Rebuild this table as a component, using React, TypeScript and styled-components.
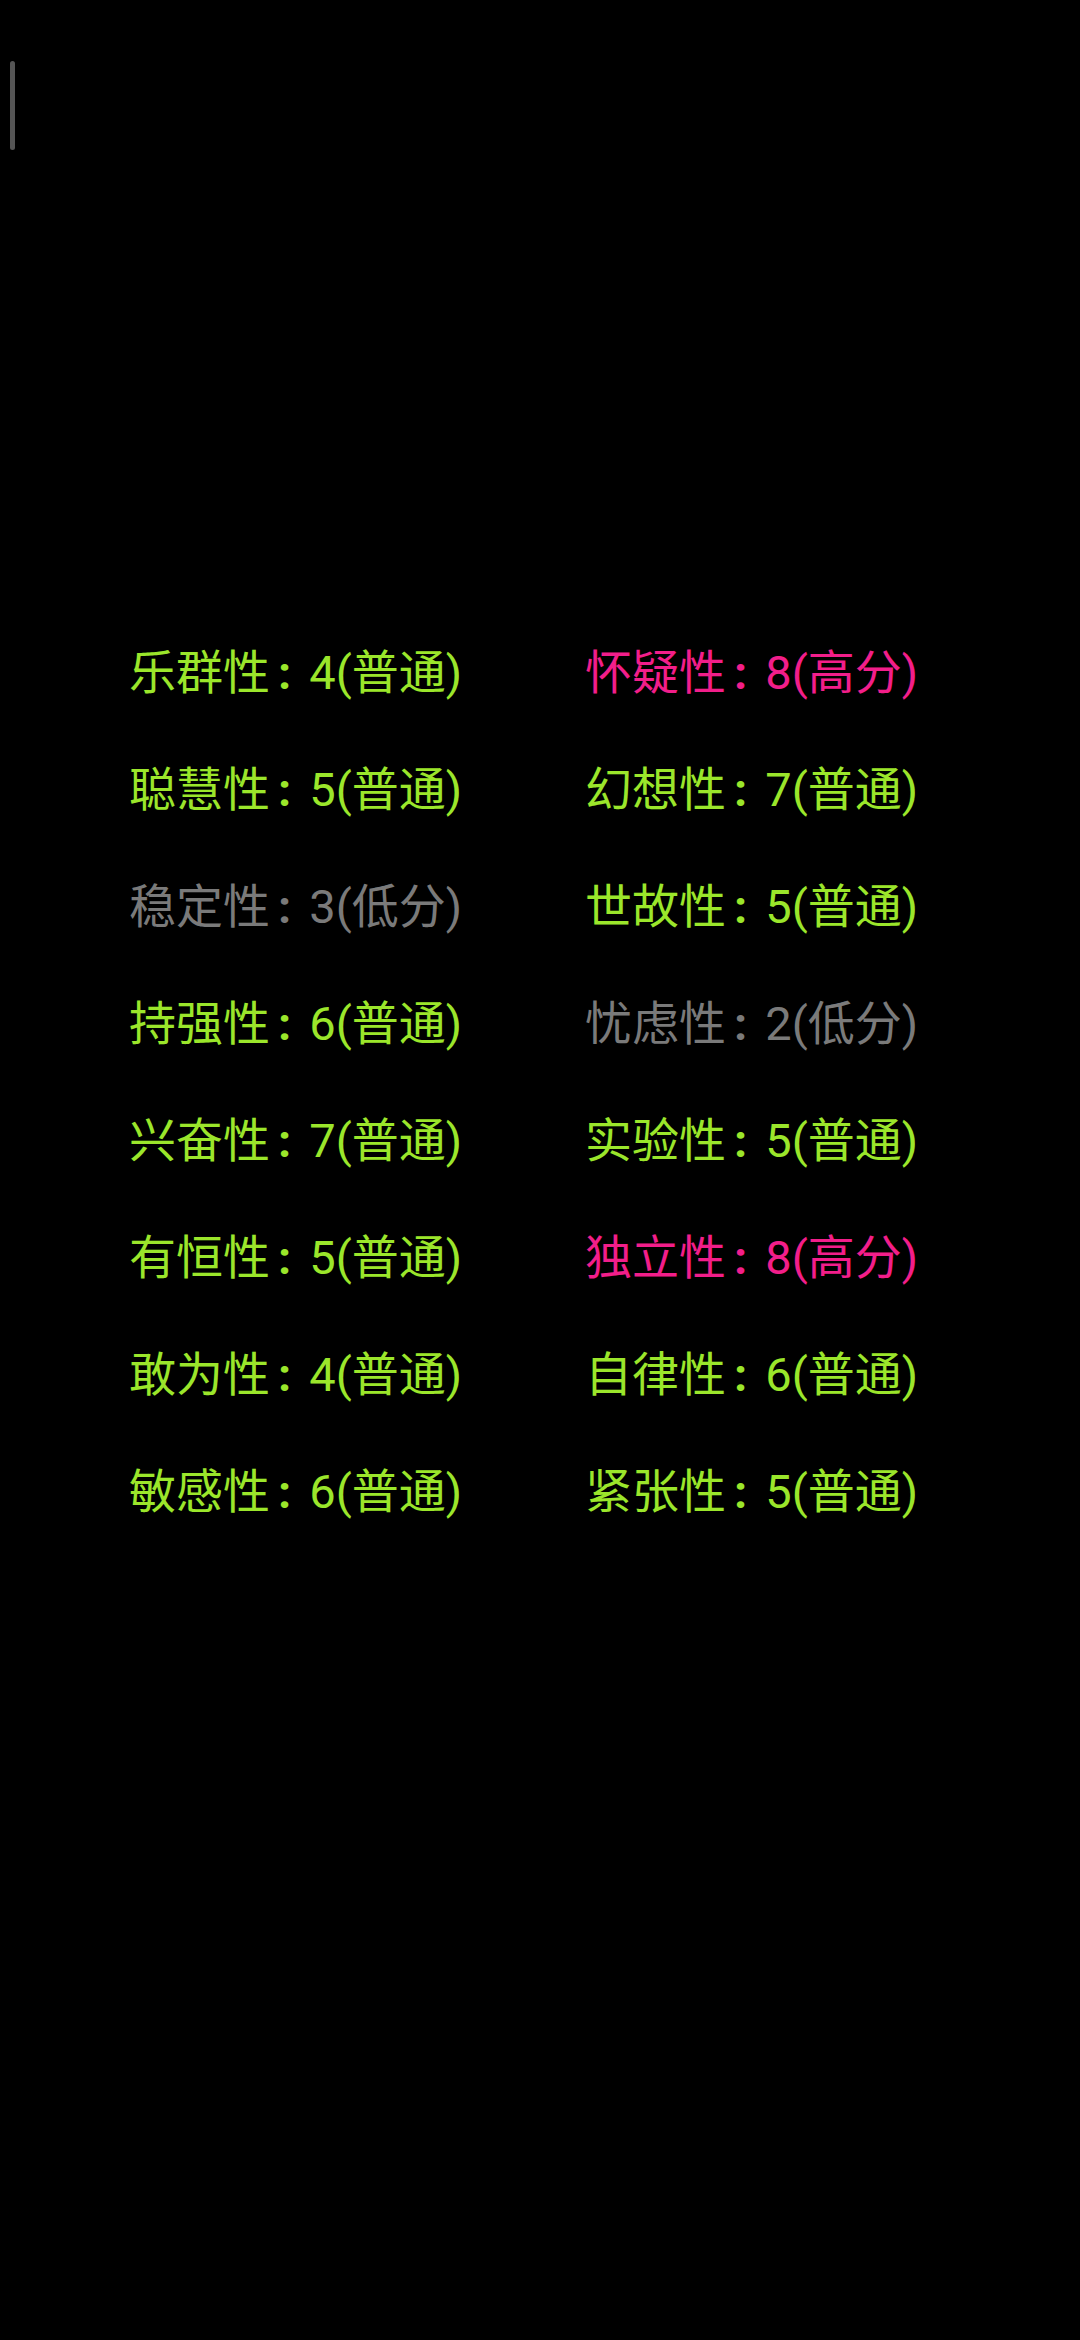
import React from "react";
import styled, { createGlobalStyle } from "styled-components";

const Global = createGlobalStyle`
  html, body { margin: 0; padding: 0; background: #000; }
  body { font-family: Roboto, "Noto Sans CJK SC", sans-serif; }
`;

const Page = styled.div`
  width: 1080px;
  min-height: 2340px;
  background: #000;
  display: flex;
  flex-direction: column;
`;

const Caret = styled.div`
  margin: 61px 0 0 10px;
  width: 5px;
  height: 89px;
  border-radius: 3px;
  background: #555;
`;

const Grid = styled.div`
  margin-top: 464px;
  padding-left: 129px;
  display: grid;
  grid-template-columns: 456px auto;
`;

type Level = "normal" | "high" | "low";

const colors: Record<Level, string> = {
  normal: "#9be62b",
  high: "#f21e8a",
  low: "#7a7a7a",
};

const Item = styled.div<{ $level: Level }>`
  font-family: Roboto, "Noto Sans CJK SC", sans-serif;
  font-size: 47px;
  line-height: 117px;
  height: 117px;
  white-space: nowrap;
  color: ${(p) => colors[p.$level]};
`;

const Colon = styled.span`
  font-family: Roboto, sans-serif;
  font-weight: 700;
  margin: 0 18px 0 8px;
`;

const items: [string, number][] = [
  ["乐群性", 4],
  ["怀疑性", 8],
  ["聪慧性", 5],
  ["幻想性", 7],
  ["稳定性", 3],
  ["世故性", 5],
  ["持强性", 6],
  ["忧虑性", 2],
  ["兴奋性", 7],
  ["实验性", 5],
  ["有恒性", 5],
  ["独立性", 8],
  ["敢为性", 4],
  ["自律性", 6],
  ["敏感性", 6],
  ["紧张性", 5],
];

function level(v: number): Level {
  if (v >= 8) return "high";
  if (v <= 3) return "low";
  return "normal";
}

const label: Record<Level, string> = { normal: "普通", high: "高分", low: "低分" };

export default function App() {
  return (
    <Page>
      <Global />
      <Caret />
      <Grid>
        {items.map(([name, v]) => {
          const l = level(v);
          return (
            <Item key={name} $level={l}>
              {name}
              <Colon>:</Colon>
              {v}({label[l]})
            </Item>
          );
        })}
      </Grid>
    </Page>
  );
}
